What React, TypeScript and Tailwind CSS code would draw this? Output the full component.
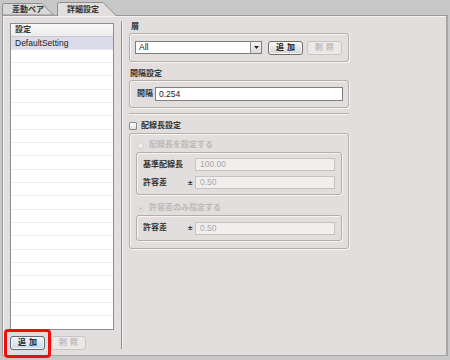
import React from 'react';

const rowHeights = Array.from({ length: 21 }, (_, i) => (i % 3 === 2 ? 'h-[14px]' : 'h-[13px]'));

const Btn = ({ label, disabled, blue }: { label: string; disabled?: boolean; blue?: boolean }) => {
    if (disabled) {
        return (
            <div className="w-[35px] h-[14px] rounded-[3px] border border-[#c9c6c4] bg-[#ebe9e8] flex items-center justify-center text-[8px] font-bold text-[#bdbab8] tracking-[3px] pl-[3px]">
                {label}
            </div>
        );
    }
    return (
        <div
            className={
                blue
                    ? 'w-[35px] h-[14px] rounded-[3px] border border-[#5f6c7a] bg-gradient-to-b from-[#eef4fa] to-[#c9d9ea] flex items-center justify-center text-[8px] font-bold text-[#222] tracking-[3px] pl-[3px] shadow-[inset_0_0_0_1px_#f4f8fc]'
                    : 'w-[35px] h-[14px] rounded-[3px] border border-[#6e6e6e] bg-gradient-to-b from-[#f7f7f7] to-[#d6d4d3] flex items-center justify-center text-[8px] font-bold text-[#222] tracking-[3px] pl-[3px] shadow-[inset_0_0_0_1px_#fafafa]'
            }
        >
            {label}
        </div>
    );
};

const Group = ({ className, children }: { className: string; children: React.ReactNode }) => (
    <div className={`rounded-[3px] border border-[#b3afad] shadow-[inset_1px_1px_0_#f6f5f4,1px_1px_0_#f6f5f4] ${className}`}>
        {children}
    </div>
);

const DisabledRow = ({ label, sign, value }: { label: string; sign?: boolean; value: string }) => (
    <div className="flex items-center h-[13px]">
        <span className="w-[45px] text-[8px] font-bold text-[#333]">{label}</span>
        <span className="w-[7px] text-[8px] font-bold text-[#333]">{sign ? '±' : ''}</span>
        <div className="w-[140px] h-[13px] border border-[#c6c3c1] bg-[#f0efee] text-[8.5px] text-[#aaa7a5] pl-[4px] flex items-center">
            {value}
        </div>
    </div>
);

const Radio = ({ checked, label }: { checked?: boolean; label: string }) => (
    <div className="flex items-center h-[12px] pl-[7px] gap-[5px]">
        <div className="w-[7px] h-[7px] rounded-full border border-[#d2cfcd] bg-[#eeedec] flex items-center justify-center">
            {checked && <div className="w-[3px] h-[3px] rounded-full bg-[#c4c1bf]" />}
        </div>
        <span className="text-[8px] font-bold text-[#bcb9b7]">{label}</span>
    </div>
);

export default function App() {
    return (
        <div className="relative w-[450px] h-[360px] bg-[#c7c7c7] font-['Liberation_Sans','Noto_Sans_CJK_JP',sans-serif] overflow-hidden">
            {/* Tabs */}
            <div className="h-[15px] flex items-end pl-[2px] gap-[3px]">
                <div className="relative w-[52px] h-[12px]">
                    <svg className="absolute inset-0" width="52" height="12" viewBox="0 0 52 12">
                        <path d="M0.5 12 V2.5 Q0.5 0.5 2.5 0.5 H40 L51.5 12 Z" fill="#d9d8d8" stroke="#8e8e8e" />
                    </svg>
                    <span className="relative block pl-[10px] pt-[1px] text-[8px] font-bold text-[#333] leading-[11px]">差動ペア</span>
                </div>
                <div className="relative z-10 w-[60px] h-[14px] mb-[-1px]">
                    <svg className="absolute inset-0" width="60" height="14" viewBox="0 0 60 14">
                        <path d="M0.5 14 V2.5 Q0.5 0.5 2.5 0.5 H46 L59.5 14" fill="#e1dedd" stroke="#8e8e8e" />
                    </svg>
                    <span className="relative block pl-[10px] pt-[2px] text-[8px] font-bold text-[#333] leading-[11px]">詳細設定</span>
                </div>
            </div>

            {/* Panel */}
            <div className="ml-[2px] mr-[2px] h-[341px] bg-[#e1dedd] border-t border-l border-[#9a9a9a] border-r-2 border-r-[#a9a7a6] border-b border-b-[#aaa8a7] shadow-[inset_1px_1px_0_#f3f2f2] flex">
                {/* Left column */}
                <div className="w-[118px] pl-[7px] pt-[7px] flex flex-col">
                    <div className="w-[104px] h-[307px] border border-[#8d8d8d] bg-white flex flex-col overflow-hidden">
                        <div className="h-[13px] shrink-0 border-b border-[#c9c9c9] bg-gradient-to-b from-[#fbfbfb] to-[#ebebeb] pl-[4px] flex items-center text-[8px] font-bold text-[#333]">
                            設定
                        </div>
                        <div className="h-[13px] shrink-0 bg-[#dcdbe9] border-b border-[#e6e6ee] pl-[4px] flex items-center text-[8.5px] text-[#222]">
                            DefaultSetting
                        </div>
                        {rowHeights.map((h, i) => (
                            <div key={i} className={`${h} shrink-0 border-b border-[#ececec]`} />
                        ))}
                    </div>
                    <div className="mt-[6px] flex gap-[6px]">
                        <Btn label="追加" blue />
                        <Btn label="削除" disabled />
                    </div>
                </div>

                {/* Divider */}
                <div className="mt-[5px] h-[328px] w-[2px] border-l border-[#8f8f8f] bg-[#f2f1f1]" />

                {/* Right column */}
                <div className="ml-[6px] w-[220px] pt-[5px] flex flex-col">
                    <div className="h-[12px] flex items-center pl-[2px] text-[8px] font-bold text-[#333]">層</div>
                    <Group className="h-[29px] flex items-center pl-[5px] gap-[6px]">
                        <div className="w-[127px] h-[13px] border border-[#7d7d7d] bg-white flex">
                            <span className="flex-1 pl-[3px] text-[8.5px] text-[#222] flex items-center">All</span>
                            <div className="w-[11px] h-full border-l border-[#8a8a8a] bg-gradient-to-b from-[#f7f7f7] to-[#d8d8d8] flex items-center justify-center">
                                <svg width="5" height="3" viewBox="0 0 5 3">
                                    <path d="M0 0 H5 L2.5 3 Z" fill="#222" />
                                </svg>
                            </div>
                        </div>
                        <div className="flex gap-[4px]">
                            <Btn label="追加" />
                            <Btn label="削除" disabled />
                        </div>
                    </Group>

                    <div className="mt-[6px] h-[12px] flex items-center pl-[1px] text-[8px] font-bold text-[#333]">間隔設定</div>
                    <Group className="h-[28px] flex items-center pl-[7px]">
                        <span className="w-[18px] text-[8px] font-bold text-[#333]">間隔</span>
                        <div className="w-[188px] h-[14px] border border-[#7f7f7f] bg-white pl-[3px] flex items-center text-[8.5px] text-[#222]">
                            0.254
                        </div>
                    </Group>

                    <div className="mt-[5px] h-[2px] border-t border-[#b2aeac] bg-[#f7f6f6]" />

                    <div className="mt-[5px] h-[12px] flex items-center gap-[4px]">
                        <div className="w-[8px] h-[8px] rounded-[1px] border border-[#8a8a8a] bg-gradient-to-b from-[#ffffff] to-[#dedede]" />
                        <span className="text-[8px] font-bold text-[#333]">配線長設定</span>
                    </div>

                    <Group className="mt-[1px] h-[116px] pt-[5px] flex flex-col">
                        <Radio label="配線長を設定する" />
                        <Group className="mt-[1px] mx-[6px] h-[43px] pt-[5px] pl-[6px] flex flex-col gap-[5px]">
                            <DisabledRow label="基準配線長" value="100.00" />
                            <DisabledRow label="許容差" sign value="0.50" />
                        </Group>
                        <div className="mt-[7px]">
                            <Radio checked label="許容差のみ指定する" />
                        </div>
                        <Group className="mt-[1px] mx-[6px] h-[26px] pl-[6px] flex items-center">
                            <DisabledRow label="許容差" sign value="0.50" />
                        </Group>
                    </Group>
                </div>
            </div>

            {/* Highlight */}
            <div className="absolute left-[4px] top-[329px] w-[47px] h-[29px] border-[3px] border-[#f20c0c] rounded-[4px]" />
        </div>
    );
}
